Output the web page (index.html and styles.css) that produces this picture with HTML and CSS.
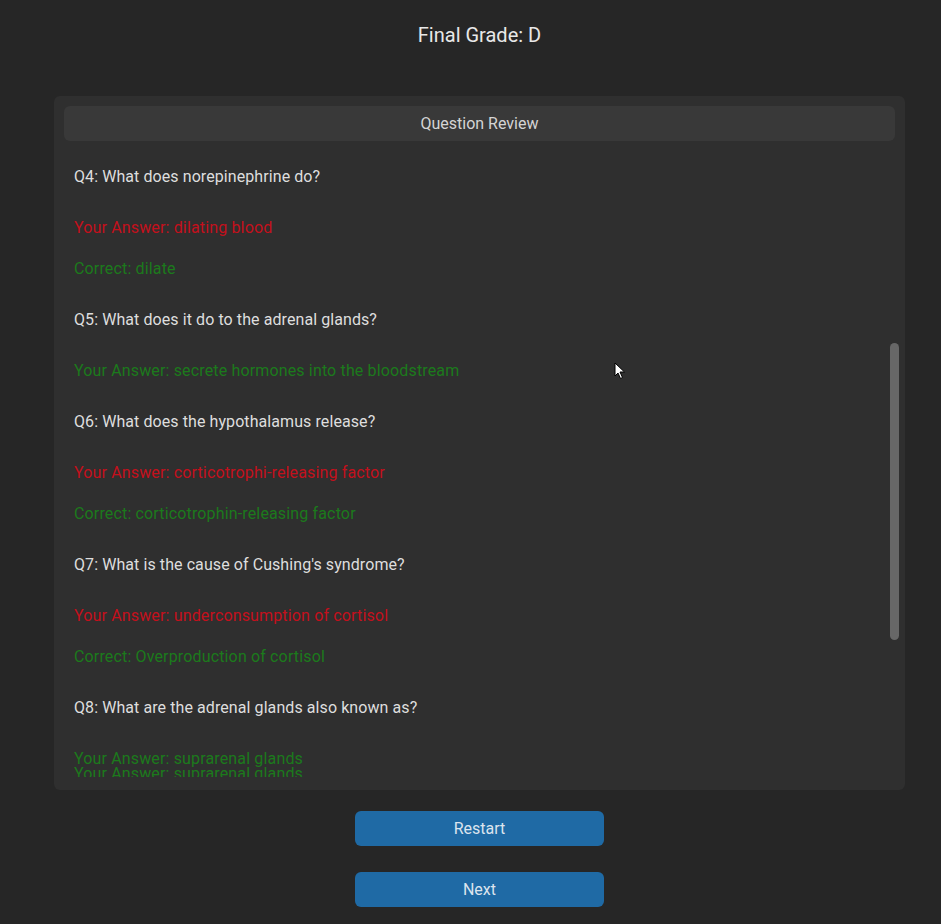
FILE: index.html
```html
<!DOCTYPE html>
<html>
<head>
<meta charset="utf-8">
<link rel="stylesheet" href="styles.css">
</head>
<body>
<div class="app">
  <div class="title">Final Grade: D</div>
  <div class="panel">
    <div class="panel-head">Question Review</div>
    <div class="scroll">
      <div class="list">
        <div class="q">Q4: What does norepinephrine do?</div>
        <div class="ans wrong">Your Answer: dilating blood</div>
        <div class="correct">Correct: dilate</div>
        <div class="q">Q5: What does it do to the adrenal glands?</div>
        <div class="ans right">Your Answer: secrete hormones into the bloodstream</div>
        <div class="q">Q6: What does the hypothalamus release?</div>
        <div class="ans wrong">Your Answer: corticotrophi-releasing factor</div>
        <div class="correct">Correct: corticotrophin-releasing factor</div>
        <div class="q">Q7: What is the cause of Cushing's syndrome?</div>
        <div class="ans wrong">Your Answer: underconsumption of cortisol</div>
        <div class="correct">Correct: Overproduction of cortisol</div>
        <div class="q">Q8: What are the adrenal glands also known as?</div>
        <div class="ans right">Your Answer: suprarenal glands</div>
        <div class="ans right ghost">Your Answer: suprarenal glands</div>
      </div>
      <div class="track"><div class="thumb"></div></div>
    </div>
  </div>
  <div class="buttons">
    <button class="btn">Restart</button>
    <button class="btn">Next</button>
  </div>
</div>
<svg class="cursor" width="12" height="18" viewBox="0 0 12 18"><path d="M1 1 L1 14 L4 11 L6.5 16.5 L8.5 15.5 L6 10 L10.5 10 Z" fill="#fff" stroke="#000" stroke-width="1"/></svg>
</body>
</html>
```
FILE: styles.css
```css
html, body {
  margin: 0;
  padding: 0;
  background: #262626;
  height: 100%;
  overflow: hidden;
}
body {
  font-family: Roboto, "Liberation Sans", sans-serif;
  position: relative;
}
.app {
  margin-left: 54px;
  width: 851px;
  display: flex;
  flex-direction: column;
  align-items: center;
}
.title {
  padding-top: 23px;
  height: 96px;
  box-sizing: border-box;
  line-height: 24px;
  font-size: 20px;
  color: #e8e8e8;
}
.panel {
  width: 851px;
  height: 694px;
  box-sizing: border-box;
  background: #2f2f2f;
  border-radius: 6px;
  padding: 10px 0 13px 0;
  display: flex;
  flex-direction: column;
}
.panel-head {
  margin: 0 10px;
  height: 35px;
  line-height: 35px;
  background: #393939;
  border-radius: 6px;
  text-align: center;
  font-size: 16px;
  color: #d4d4d4;
}
.scroll {
  flex: 1;
  display: flex;
  min-height: 0;
}
.list {
  flex: 1;
  overflow: hidden;
  padding: 5px 0 0 20px;
  font-size: 16px;
}
.q, .ans, .correct {
  height: 41px;
  line-height: 41px;
  white-space: nowrap;
}
.q, .ans {
  margin-top: 10px;
}
.q {
  color: #dedede;
  letter-spacing: 0.08px;
}
.ans, .correct {
  letter-spacing: 0.15px;
}
.wrong {
  color: #c4101c;
}
.right, .correct {
  color: #1c7a1c;
}
.ghost {
  margin-top: -26px;
}
.track {
  width: 9px;
  margin-right: 6px;
  padding-top: 202px;
}
.thumb {
  height: 297px;
  background: #676767;
  border-radius: 5px;
}
.buttons {
  margin-top: 21px;
  display: flex;
  flex-direction: column;
  gap: 26px;
}
.btn {
  width: 249px;
  height: 35px;
  border: none;
  border-radius: 6px;
  background: #1f6aa5;
  color: #dce4ee;
  font-family: Roboto, "Liberation Sans", sans-serif;
  font-size: 16px;
  padding: 0;
}
.cursor {
  position: absolute;
  left: 614px;
  top: 362px;
}
```
